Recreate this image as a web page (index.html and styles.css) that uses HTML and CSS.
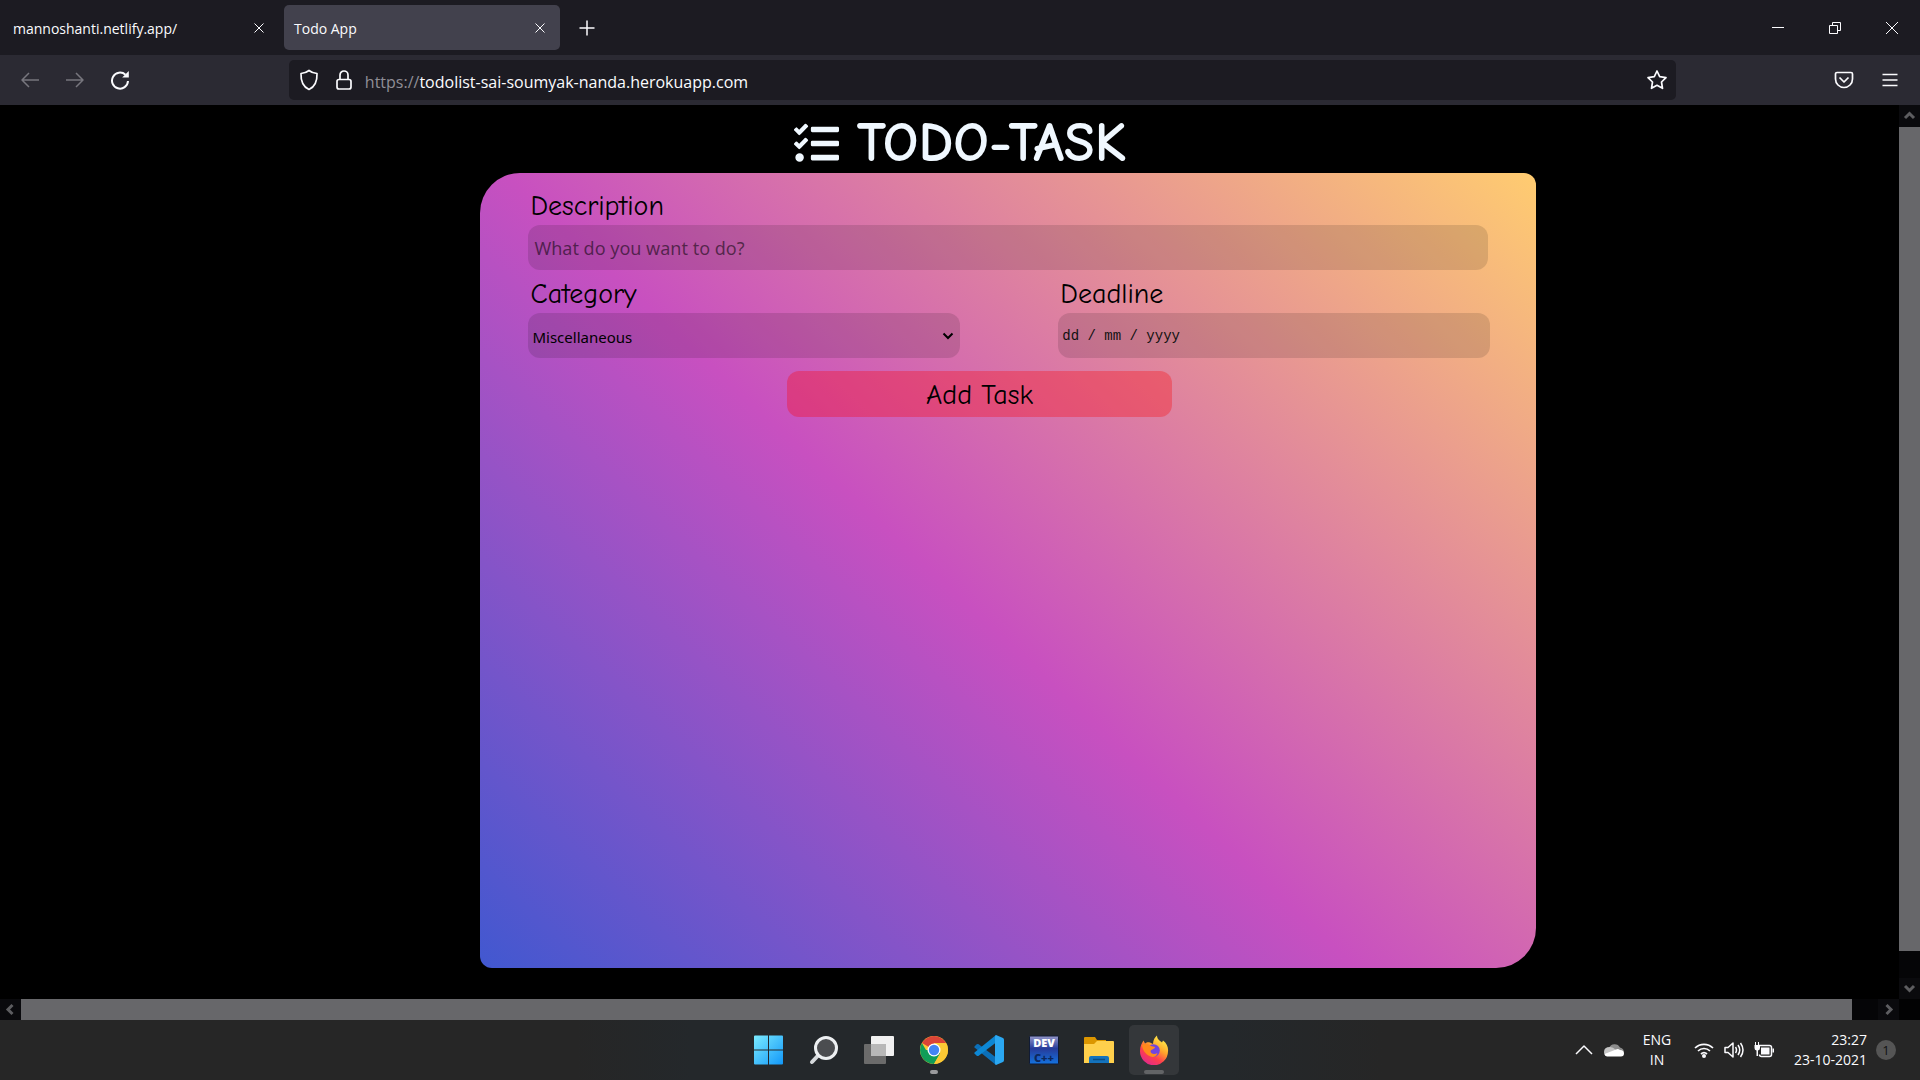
FILE: index.html
```html
<!DOCTYPE html>
<html lang="en">
<head>
<meta charset="utf-8">
<title>Todo App</title>
<link rel="stylesheet" href="styles.css">
</head>
<body>
<header class="browser">
  <div class="tabs">
    <div class="tab">
      <span class="tab-title">mannoshanti.netlify.app/</span>
      <button class="icon-btn tab-close" aria-label="Close tab"><svg width="12" height="12" viewBox="0 0 12 12"><path class="line" d="M1.500 1.500l9 9M10.500 1.500l-9 9"/></svg></button>
    </div>
    <div class="tab tab-active">
      <span class="tab-title">Todo App</span>
      <button class="icon-btn tab-close" aria-label="Close tab"><svg width="12" height="12" viewBox="0 0 12 12"><path class="line" d="M1.500 1.500l9 9M10.500 1.500l-9 9"/></svg></button>
    </div>
    <button class="icon-btn new-tab" aria-label="New tab"><svg width="18" height="18" viewBox="0 0 18 18"><path class="line thick" d="M9 1.500v15M1.500 9h15"/></svg></button>
    <div class="window-controls">
      <button class="icon-btn" aria-label="Minimize"><svg width="14" height="14" viewBox="0 0 14 14"><path class="line" d="M1 6.500h12"/></svg></button>
      <button class="icon-btn" aria-label="Restore"><svg width="14" height="14" viewBox="0 0 14 14"><path class="line" d="M1.500 4.500h8v8h-8zM4.500 4.500v-3h8v8h-3"/></svg></button>
      <button class="icon-btn" aria-label="Close"><svg width="14" height="14" viewBox="0 0 14 14"><path class="line" d="M1 1l12 12M13 1L1 13"/></svg></button>
    </div>
  </div>
  <div class="toolbar">
    <div class="nav">
      <button class="icon-btn dim" aria-label="Back"><svg width="20" height="20" viewBox="0 0 20 20"><path class="line thick" d="M19 10H2M9 3l-7 7 7 7"/></svg></button>
      <button class="icon-btn dim" aria-label="Forward"><svg width="20" height="20" viewBox="0 0 20 20"><path class="line thick" d="M1 10h17M11 3l7 7-7 7"/></svg></button>
      <button class="icon-btn" aria-label="Reload"><svg width="20" height="20" viewBox="0 0 20 20"><path class="line heavy" d="M15.500 4.800A8 8 0 1 0 18 11"/><path class="fill" d="M18.800 1v6.500h-6.600z"/></svg></button>
    </div>
    <div class="urlbar">
      <svg width="20" height="22" viewBox="0 0 20 22"><path class="line outline" d="M10 1.500c2.500 2 5 2.800 8 3 .3 8-2.500 13.500-8 16-5.500-2.500-8.300-8-8-16 3-.2 5.500-1 8-3z"/></svg>
      <svg class="lock" width="18" height="22" viewBox="0 0 18 22"><rect class="line outline" x="2" y="10.500" width="14" height="9.500" rx="2"/><path class="line outline" d="M5 10.500V6a4 4 0 0 1 8 0v4.500"/></svg>
      <span class="url"><span class="scheme">https://</span>todolist-sai-soumyak-nanda.herokuapp.com</span>
      <button class="icon-btn star" aria-label="Bookmark this page"><svg width="22" height="22" viewBox="0 0 22 22"><path class="line outline" d="M11 2l2.700 5.700 6.300.9-4.500 4.400 1 6.300-5.500-3-5.500 3 1-6.300L2 8.600l6.300-.9z"/></svg></button>
    </div>
    <div class="tools">
      <button class="icon-btn" aria-label="Pocket"><svg width="20" height="18" viewBox="0 0 20 18"><path class="line outline" d="M3 1.500h14a1.500 1.500 0 0 1 1.500 1.500v5a8.500 8.500 0 0 1-17 0V3A1.500 1.500 0 0 1 3 1.500zM5.500 6.500L10 11l4.500-4.500"/></svg></button>
      <button class="icon-btn" aria-label="Menu"><svg width="16" height="14" viewBox="0 0 16 14"><path class="line thick" d="M.5 1.500h15M.5 7h15M.5 12.500h15"/></svg></button>
    </div>
  </div>
</header>

<div class="viewport">
  <main class="page">
    <h1 class="title">
      <svg width="45" height="45" viewBox="0 0 512 512" fill="currentColor"><path d="M139.610 35.500a12 12 0 0 0-17 0L58.930 98.810l-22.700-22.120a12 12 0 0 0-17 0L3.530 92.410a12 12 0 0 0 0 17l47.590 47.400a12.780 12.780 0 0 0 17.610 0l15.590-15.620L156.520 69a12.090 12.090 0 0 0 .09-17zm0 159.190a12 12 0 0 0-17 0l-63.680 63.720-22.700-22.100a12 12 0 0 0-17 0L3.530 252a12 12 0 0 0 0 17L51 316.500a12.770 12.770 0 0 0 17.600 0l15.700-15.690 72.200-72.220a12 12 0 0 0 .09-16.900zM64 368c-26.490 0-48.590 21.500-48.590 48S37.530 464 64 464a48 48 0 0 0 0-96zm432 16H208a16 16 0 0 0-16 16v32a16 16 0 0 0 16 16h288a16 16 0 0 0 16-16v-32a16 16 0 0 0-16-16zm0-320H208a16 16 0 0 0-16 16v32a16 16 0 0 0 16 16h288a16 16 0 0 0 16-16V80a16 16 0 0 0-16-16zm0 160H208a16 16 0 0 0-16 16v32a16 16 0 0 0 16 16h288a16 16 0 0 0 16-16v-32a16 16 0 0 0-16-16z"/></svg>
      <span>TODO-TASK</span>
    </h1>
    <form class="card">
      <div class="field wide">
        <label for="description">Description</label>
        <input class="control description" id="description" type="text" placeholder="What do you want to do?">
      </div>
      <div class="field">
        <label for="category">Category</label>
        <div class="select-wrap">
          <select class="control category" id="category"><option>Miscellaneous</option></select>
          <svg class="caret" width="12" height="8" viewBox="0 0 12 8"><path d="M1.500 1.500L6 6l4.500-4.500"/></svg>
        </div>
      </div>
      <div class="field">
        <label for="deadline">Deadline</label>
        <input class="control deadline" id="deadline" type="text" placeholder="dd / mm / yyyy">
      </div>
      <button class="add" type="button">Add Task</button>
    </form>
  </main>
  <div class="scroll scroll-v">
    <svg class="arrow" width="21" height="22" viewBox="0 0 21 22"><path d="M6 13l4.500-4.500L15 13"/></svg>
    <div class="thumb"></div>
    <svg class="arrow end" width="21" height="21" viewBox="0 0 21 21"><path d="M6 8l4.500 4.500L15 8"/></svg>
  </div>
  <div class="scroll scroll-h">
    <svg class="arrow" width="21" height="21" viewBox="0 0 21 21"><path d="M12.500 6L8 10.500l4.500 4.500"/></svg>
    <div class="thumb"></div>
    <svg class="arrow end" width="21" height="21" viewBox="0 0 21 21"><path d="M8.500 6l4.500 4.500L8.500 15"/></svg>
  </div>
  <div class="corner"></div>
</div>

<footer class="taskbar">
  <div class="apps">
    <button class="app" aria-label="Start"><svg width="30" height="30" viewBox="0 0 30 30"><defs><linearGradient id="win" x1="0" y1="0" x2="30" y2="30" gradientUnits="userSpaceOnUse"><stop stop-color="#7cecff"/><stop offset="1" stop-color="#0f95f8"/></linearGradient></defs><path fill="url(#win)" d="M0 1.500Q0 .5 1 .5h13v14H0zM15 .5h13q1 0 1 1v13H15zM0 15.500h14v14H1q-1 0-1-1zM15 15.500h14v13q0 1-1 1H15z"/></svg></button>
    <button class="app" aria-label="Search"><svg width="30" height="30" viewBox="0 0 30 30"><path d="M10.500 19L3 27" stroke="#d5d9dc" stroke-width="4" stroke-linecap="round"/><circle cx="17" cy="13" r="10.500" fill="#4b4d50" stroke="#edf0f2" stroke-width="3"/></svg></button>
    <button class="app" aria-label="Task view"><svg width="30" height="30" viewBox="0 0 30 30"><rect x="7" y="1" width="23" height="20" rx="1" fill="#f1f1f1"/><rect y="9" width="22" height="20" rx="1" fill="#6b6b6b"/><path fill="#b8b8b8" d="M7 9h15v12H7z"/></svg></button>
    <button class="app running" aria-label="Chrome"><svg width="28" height="28" viewBox="0 0 28 28"><circle cx="14" cy="14" r="14" fill="#fcc934"/><path fill="#db4437" d="M14 14L1.900 7A14 14 0 0 1 26.100 7H14z"/><path fill="#109d58" d="M1.900 7A14 14 0 0 0 14 28l6.100-10.500L14 14H6z"/><path fill="#fcc934" d="M14 28A14 14 0 0 0 26.100 7H14l6.100 10.500z"/><circle cx="14" cy="14" r="6.500" fill="#fff"/><circle cx="14" cy="14" r="5.200" fill="#4285f4"/></svg></button>
    <button class="app" aria-label="Visual Studio Code"><svg width="30" height="30" viewBox="0 0 30 30"><path fill="#0b6fb8" d="M.7 11.200l2-1.900q1-.7 2 0L24 24l-2 6L.8 12.800q-1-.8-.1-1.600z"/><path fill="#0d87d4" d="M.7 18.800l2 1.900q1 .7 2 0L24 6l-2-6L.8 17.200q-1 .8-.1 1.600z"/><path fill="#2ba8f2" d="M22 0l7 3q1 .5 1 2v20q0 1.500-1 2l-7 3q-1-.3-1-2V2q0-1.700 1-2z"/></svg></button>
    <button class="app" aria-label="Dev-C++"><svg width="30" height="30" viewBox="0 0 30 30"><defs><linearGradient id="dev" x2="0" y2="1"><stop stop-color="#9698ca"/><stop offset=".45" stop-color="#263b9a"/><stop offset="1" stop-color="#1473df"/></linearGradient></defs><rect x=".5" y="1" width="29" height="28" rx="1" fill="url(#dev)" stroke="#101b35"/><text class="dev-top" x="15" y="12" text-anchor="middle">DEV</text><text class="dev-bottom" x="15" y="27" text-anchor="middle">C++</text></svg></button>
    <button class="app" aria-label="File Explorer"><svg width="30" height="28" viewBox="0 0 30 28"><path fill="#dc9600" d="M0 2q0-1 1-1h10l2 3h9v7H0z"/><path fill="#ffd04c" d="M0 8h10l3-3h16q1 0 1 1v21H0z"/><path fill="#1473bd" d="M5 27v-5q0-2 2-2h16q2 0 2 2v5z"/><path d="M9 23.500h12" stroke="#0b4c83" stroke-width="1.500"/></svg></button>
    <button class="app current" aria-label="Firefox"><svg width="30" height="30" viewBox="0 0 30 30"><defs><linearGradient id="fox" x1="24" y1="2" x2="7" y2="28" gradientUnits="userSpaceOnUse"><stop stop-color="#fff44f"/><stop offset=".4" stop-color="#ffa52a"/><stop offset=".7" stop-color="#ff3f4c"/><stop offset="1" stop-color="#e32b87"/></linearGradient></defs><path fill="url(#fox)" d="M1 16C1 11 3 8 4.500 5.500L6 8.500C8 7 9 7 11 7.500l3 1.500c0-4 2-7 4-8.500 0 4 3 5 5 7l1-2c4 3 5.500 7 5 11A14 14 0 0 1 1 16z"/><circle cx="14.500" cy="15.500" r="6.300" fill="#7245df"/><path fill="#ff8a1c" d="M3 10c3-2 7-1 9 1l4 1c0 2-4 2.500-4.500 4 0 3 4 4 7 2-1 4-5 5-8 3-4-2-7-6-7.500-11z"/></svg></button>
  </div>
  <div class="tray">
    <svg width="18" height="10" viewBox="0 0 18 10"><path class="line thick" d="M1 9l8-8 8 8"/></svg>
    <svg class="cloud" width="20" height="14" viewBox="0 0 20 14"><path fill="#8c8c8c" d="M5 5a6 6 0 0 1 11-.5q4 1 4 5L10 10z"/><path fill="#c5c5c5" d="M0 9q0-5 6-5 3 0 6 3L4 13Q0 13 0 9z"/><path fill="#fff" d="M3 13.500Q.8 13 .5 11L12 6.500q2-1 4 .5 4 0 4 3.500 0 3-3 3z"/></svg>
    <div class="lang">ENG<br>IN</div>
    <svg width="20" height="16" viewBox="0 0 20 16"><path class="line outline" d="M1 6a13 13 0 0 1 18 0M4 9a8.500 8.500 0 0 1 12 0M7 12a4.500 4.500 0 0 1 6 0"/><circle class="fill" cx="10" cy="14" r="2"/></svg>
    <svg class="volume" width="20" height="18" viewBox="0 0 20 18"><path class="line thick" d="M1 6.500h3l5-4.500v14l-5-4.500H1zM11.500 6q2 3 0 6M14 4q3.500 5 0 10M16.500 2q5 7 0 14"/></svg>
    <svg class="battery" width="20" height="18" viewBox="0 0 20 18"><path class="line thick" d="M5 4.500h10.500q2 0 2 2v7q0 2-2 2h-8q-2 0-2-2"/><path class="fill" d="M7 6.500h8.500v7H7zM18.500 7.500H20v4h-1.500zM1 1h1v3h2V1h1v3h1v3q0 2-2 2.500V15H2.500V9.500Q.5 9 .5 7V4H1z"/></svg>
    <time class="clock">23:27<br>23-10-2021</time>
    <span class="badge">1</span>
  </div>
</footer>
</body>
</html>
```
FILE: styles.css
```css
* { box-sizing: border-box; }

body {
  margin: 0;
  min-height: 100vh;
  display: flex;
  flex-direction: column;
  background: #000;
  color: #fbfbfe;
  font-family: "Segoe UI", "Open Sans", "Noto Sans", sans-serif;
  font-size: 14px;
}

svg { display: block; flex: none; }
button { font: inherit; color: inherit; background: none; border: 0; padding: 0; }

.line { fill: none; stroke: currentColor; stroke-width: 1; stroke-linejoin: round; }
.thick { stroke-width: 1.5; }
.outline { stroke-width: 1.7; }
.heavy { stroke-width: 2; }
.fill { fill: currentColor; }

.icon-btn { display: flex; align-items: center; justify-content: center; }
.dim { color: #77767e; }

/* Browser chrome */
.tabs {
  display: flex;
  align-items: center;
  height: 55px;
  background: #1c1b22;
}
.tab {
  display: flex;
  align-items: center;
  justify-content: space-between;
  width: 276px;
  height: 45px;
  padding: 0 14px 0 10px;
  border-radius: 5px;
}
.tab:first-child { width: 284px; padding: 0 19px 0 13px; }
.tab-active { background: #42414d; }
.tab-title { line-height: 20px; padding-top: 2px; }
.new-tab { margin-left: 18px; }
.window-controls { display: flex; gap: 43px; margin-left: auto; padding-right: 21px; }

.toolbar {
  display: flex;
  align-items: center;
  height: 50px;
  padding: 0 20px;
  background: #2b2a33;
}
.nav { display: flex; gap: 25px; width: 14.3%; min-width: 160px; }
.urlbar {
  display: flex;
  align-items: center;
  flex: 1;
  height: 40px;
  padding: 0 8px 0 10px;
  border-radius: 5px;
  background: #1c1b22;
}
.lock { margin-left: 16px; }
.url { margin-left: 12px; font-size: 16px; line-height: 24px; padding-top: 3px; }
.scheme { color: #8f8e96; }
.star { margin-left: auto; }
.tools { display: flex; gap: 28px; width: 11.9%; justify-content: flex-end; padding-right: 2px; }

/* Page area and its scroll bars */
.viewport {
  flex: 1;
  display: grid;
  grid-template-columns: minmax(0, 1fr) 21px;
  grid-template-rows: 1fr 21px;
}
.page { display: flex; flex-direction: column; padding-bottom: 31px; }
.scroll { display: flex; background: #050507; }
.scroll-v { flex-direction: column; }
.thumb { background: #67676a; }
.scroll-v .thumb { height: 92.2%; }
.scroll-h .thumb { width: 96.4%; }
.arrow { fill: none; stroke: #5d5d60; stroke-width: 3; background: #0a0a0d; }
.end { margin-top: auto; }
.scroll-h .end { margin: 0 0 0 auto; }
.corner { background: #020203; }

/* Todo page */
.title {
  display: flex;
  align-items: center;
  justify-content: center;
  gap: 18px;
  height: 68px;
  margin: 0 0 0 21px;
  padding-top: 8px;
  color: #f0f8ff;
  font-family: "Comic Sans MS", "Comic Neue", "Noto Sans", sans-serif;
  font-size: 56px;
  line-height: 60px;
}
.card {
  flex: 1;
  display: grid;
  grid-template-columns: 1fr 1fr;
  column-gap: 98px;
  align-content: start;
  width: 55.6%;
  margin-left: 25.3%;
  padding: 12px 46px 24px 48px;
  border-radius: 40px 12px;
  background: linear-gradient(43deg, #4158d0 0%, #c850c0 46%, #ffcc70 100%);
  color: #000;
  font-family: "Comic Sans MS", "Comic Neue", "Noto Sans", sans-serif;
  font-size: 28px;
}
.field { display: flex; flex-direction: column; height: 88px; }
.wide { grid-column: 1 / -1; padding-right: 2px; }
.field label { height: 40px; padding-left: 2px; line-height: 42px; }
.control {
  display: block;
  width: 100%;
  height: 45px;
  border: 0;
  border-radius: 12px;
  outline: 0;
  background: rgba(0, 0, 0, 0.12);
  color: #000;
}
.description { padding: 0 6px; font-family: Tahoma, "Noto Sans", sans-serif; font-size: 18px; }
.description::placeholder { color: rgba(0, 0, 0, 0.54); }
.select-wrap { position: relative; }
.category {
  appearance: none;
  padding: 2px 4px 0;
  font-family: Tahoma, "Noto Sans", sans-serif;
  font-size: 15px;
}
.caret {
  position: absolute;
  right: 6px;
  top: 19px;
  fill: none;
  stroke: #000;
  stroke-width: 2;
  pointer-events: none;
}
.deadline { padding: 0 4px; font-family: "Courier New", "Liberation Mono", monospace; font-size: 14px; }
.deadline::placeholder { color: #111; }
.add {
  grid-column: 1 / -1;
  width: 40%;
  height: 46px;
  margin: 10px 0 0 26.9%;
  padding-top: 2px;
  border-radius: 12px;
  background: rgba(255, 0, 0, 0.3);
  font-size: 28px;
}

/* Taskbar */
.taskbar {
  display: grid;
  grid-template-columns: 1fr auto 1fr;
  align-items: center;
  height: 60px;
  background: linear-gradient(90deg, #262626 30%, #24282b 36%, #24282b 64%, #262626 72%);
}
.apps { grid-column: 2; display: flex; gap: 5px; padding-left: 2px; }
.app {
  position: relative;
  display: flex;
  align-items: center;
  justify-content: center;
  width: 50px;
  height: 50px;
  border-radius: 5px;
}
.current { background: #34373a; }
.running::after, .current::after {
  content: "";
  position: absolute;
  bottom: 1px;
  width: 8px;
  height: 4px;
  border-radius: 2px;
  background: #9a9b9d;
}
.current::after { width: 20px; background: #626466; }
.dev-top, .dev-bottom { font-family: "Open Sans", sans-serif; font-weight: 800; font-size: 11px; fill: #fff; }
.dev-bottom { fill: #0c275c; }
.tray {
  display: flex;
  align-items: center;
  justify-content: flex-end;
  padding-right: 24px;
  line-height: 20px;
}
.cloud { margin-left: 11px; }
.lang { width: 30px; margin: 0 22px 0 18px; text-align: center; }
.volume, .battery { margin-left: 10px; }
.clock { width: 84px; margin-left: 9px; text-align: right; white-space: nowrap; }
.badge {
  width: 20px;
  height: 20px;
  margin-left: 9px;
  border-radius: 50%;
  background: #555;
  color: #111;
  font-size: 13px;
  text-align: center;
}
```
